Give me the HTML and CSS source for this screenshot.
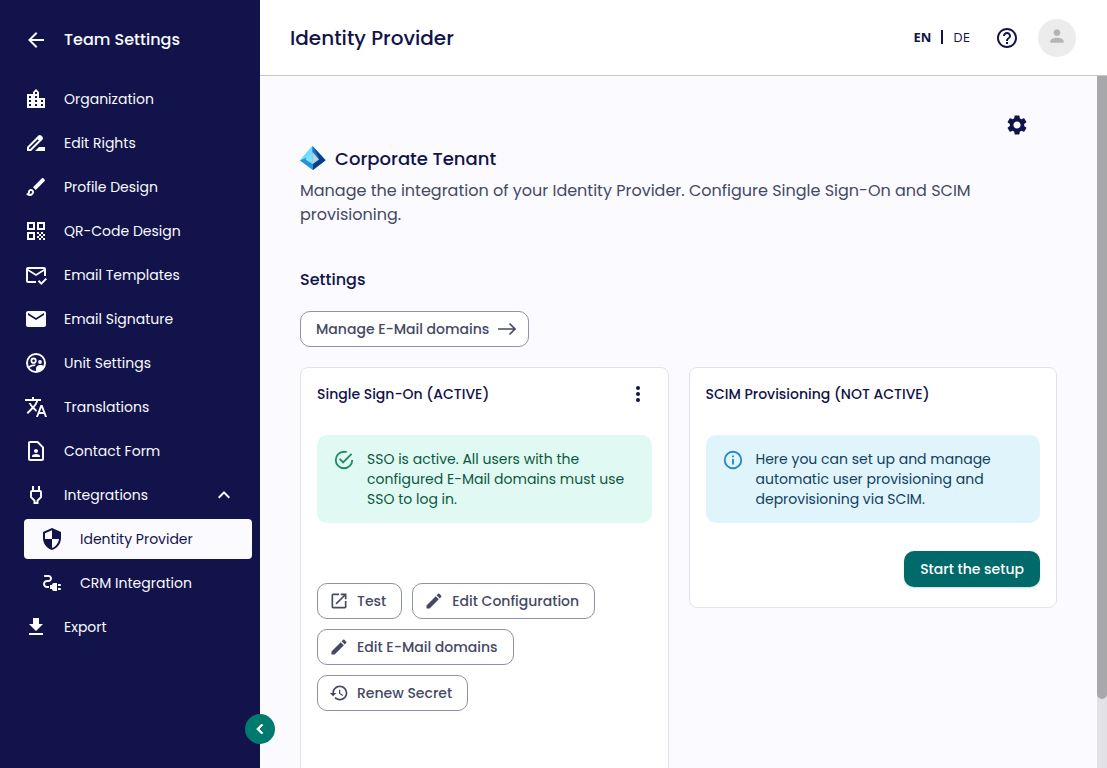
FILE: index.html
```
<!DOCTYPE html>
<html lang="en">
<head>
<meta charset="utf-8">
<title>Identity Provider</title>
<link rel="stylesheet" href="styles.css">
</head>
<body>
<div class="app">
  <aside class="sidebar">
    <a class="nav-head" href="#"><svg class="icon" viewBox="0 0 24 24"><path d="M20 11H7.830l5.590-5.590L12 4l-8 8 8 8 1.410-1.410L7.830 13H20z"/></svg>Team Settings</a>
    <nav class="nav">
      <a class="nav-item" href="#"><svg class="icon" viewBox="0 0 24 24"><path d="M15 11V5l-3-3-3 3v2H3v14h18V11h-6zm-8 8H5v-2h2v2zm0-4H5v-2h2v2zm0-4H5V9h2v2zm6 8h-2v-2h2v2zm0-4h-2v-2h2v2zm0-4h-2V9h2v2zm0-4h-2V5h2v2zm6 12h-2v-2h2v2zm0-4h-2v-2h2v2z"/></svg>Organization</a>
      <a class="nav-item" href="#"><svg class="icon" viewBox="0 0 24 24"><path d="M18.410 5.800 17.200 4.590c-.78-.78-2.050-.78-2.830 0l-2.680 2.680L3 15.960V20h4.040l8.740-8.740 2.630-2.630c.79-.78.79-2.050 0-2.830zM6.210 18H5v-1.210l8.660-8.660 1.210 1.210L6.210 18zM11 20l4-4h6v4H11z"/></svg>Edit Rights</a>
      <a class="nav-item" href="#"><svg class="icon" viewBox="0 0 24 24"><path d="M7 16c.55 0 1 .45 1 1 0 1.100-.9 2-2 2-.17 0-.33-.02-.5-.05.31-.55.5-1.210.5-1.950 0-.55.45-1 1-1M18.670 3c-.26 0-.51.1-.71.29L9 12.250 11.750 15l8.960-8.960c.39-.39.39-1.020 0-1.410l-1.340-1.340c-.2-.2-.45-.29-.7-.29zM7 14c-1.660 0-3 1.340-3 3 0 1.310-1.160 2-2 2 .92 1.220 2.490 2 4 2 2.210 0 4-1.790 4-4 0-1.660-1.340-3-3-3z" fill-rule="evenodd"/></svg>Profile Design</a>
      <a class="nav-item" href="#"><svg class="icon" viewBox="0 0 24 24"><path d="M3 11h8V3H3v8zm2-6h4v4H5V5zM3 21h8v-8H3v8zm2-6h4v4H5v-4zM13 3v8h8V3h-8zm6 6h-4V5h4v4zM19 19h2v2h-2zM13 13h2v2h-2zM15 15h2v2h-2zM13 17h2v2h-2zM15 19h2v2h-2zM17 17h2v2h-2zM17 13h2v2h-2zM19 15h2v2h-2z"/></svg>QR-Code Design</a>
      <a class="nav-item" href="#"><svg class="icon" viewBox="0 0 24 24"><path d="M22 6c0-1.100-.9-2-2-2H4c-1.100 0-2 .9-2 2v12c0 1.100.9 2 2 2h8v-2H4V8l8 5 8-5v5h2V6zm-10 5L4 6h16l-8 5zM17.340 22l-3.540-3.540 1.410-1.410 2.120 2.120 4.240-4.240L23 16.340 17.340 22z"/></svg>Email Templates</a>
      <a class="nav-item" href="#"><svg class="icon" viewBox="0 0 24 24"><path d="M20 4H4c-1.100 0-2 .9-2 2v12c0 1.100.9 2 2 2h16c1.100 0 2-.9 2-2V6c0-1.100-.9-2-2-2zm0 4-8 5-8-5V6l8 5 8-5v2z"/></svg>Email Signature</a>
      <a class="nav-item" href="#"><svg class="icon" viewBox="0 0 24 24"><circle cx="12" cy="12" r="9" fill="none" stroke="currentColor" stroke-width="2"/><circle cx="9.600" cy="9.700" r="2.200" fill="none" stroke="currentColor" stroke-width="1.800"/><circle cx="16" cy="11" r="1.900"/><path d="M4.500 15.500c1.300-1.300 3.300-2 5.100-2 .8 0 1.600.1 2.300.3l-1.700 1.500c-1.800-.1-3.400.5-4.600 1.800zM12 21v-3.700c0-2.300 2.300-3.400 4.200-3.400 1.500 0 3 .5 4 1.400C18.900 18.900 15.800 21 12 21z"/></svg>Unit Settings</a>
      <a class="nav-item" href="#"><svg class="icon" viewBox="0 0 24 24"><path d="M12.870 15.070l-2.540-2.510.03-.03c1.740-1.940 2.980-4.170 3.710-6.530H17V4h-7V2H8v2H1v1.990h11.170C11.500 7.920 10.440 9.750 9 11.350 8.070 10.320 7.300 9.190 6.690 8h-2c.73 1.630 1.730 3.170 2.980 4.560l-5.090 5.020L4 19l5-5 3.110 3.110.76-2.040zM18.500 10h-2L12 22h2l1.120-3h4.750L21 22h2l-4.500-12zm-2.620 7l1.620-4.330L19.120 17h-3.240z"/></svg>Translations</a>
      <a class="nav-item" href="#"><svg class="icon" viewBox="0 0 24 24"><path fill-rule="evenodd" d="M13.170 4L18 8.830V20H6V4h7.170M14 2H6c-1.100 0-2 .9-2 2v16c0 1.100.9 2 2 2h12c1.100 0 2-.9 2-2V8l-6-6zM12 14c1.100 0 2-.9 2-2s-.9-2-2-2-2 .9-2 2 .9 2 2 2zM16 17.430c0-.81-.48-1.530-1.220-1.850-.85-.37-1.790-.58-2.780-.58s-1.930.21-2.780.58C8.480 15.900 8 16.620 8 17.430V18h8v-.57z"/></svg>Contact Form</a>
      <a class="nav-item" href="#" aria-expanded="true"><svg class="icon" viewBox="0 0 24 24"><path fill-rule="evenodd" d="M16 9v4.660l-3.500 3.510V19h-1v-1.830L8 13.650V9h8m0-6h-2v4h-4V3H8v4c-1.100 0-2 .9-2 2v5.500L9.500 18v3h5v-3l3.500-3.510V9c0-1.100-.9-2-2-2V3z"/></svg>Integrations<svg class="icon chevron" viewBox="0 0 24 24"><path d="M7.410 15.410 12 10.830l4.590 4.580L18 14l-6-6-6 6z"/></svg></a>
      <a class="nav-item nav-sub nav-active" href="#" aria-current="page"><svg class="icon" viewBox="0 0 24 24"><path d="M12 1 3 5v6c0 5.550 3.840 10.740 9 12 5.160-1.260 9-6.450 9-12V5l-9-4zm0 10.990h7c-.53 4.120-3.280 7.790-7 8.940V12H5V6.300l7-3.110v8.800z"/></svg>Identity Provider</a>
      <a class="nav-item nav-sub" href="#"><svg class="icon" viewBox="0 0 24 24"><path d="M21 14c0-.55-.45-1-1-1h-2v2h2c.55 0 1-.45 1-1zM20 17h-2v2h2c.55 0 1-.45 1-1s-.45-1-1-1zM12 14h-2v4h2c0 1.100.9 2 2 2h3v-8h-3c-1.100 0-2 .9-2 2zM5 13c0-1.100.9-2 2-2h1.500c1.930 0 3.500-1.570 3.500-3.500S10.430 4 8.500 4H5c-.55 0-1 .45-1 1s.45 1 1 1h3.500c.83 0 1.500.67 1.500 1.500S9.330 9 8.500 9H7c-2.210 0-4 1.790-4 4s1.790 4 4 4h2v-2H7c-1.100 0-2-.9-2-2z"/></svg>CRM Integration</a>
      <a class="nav-item" href="#"><svg class="icon" viewBox="0 0 24 24"><path d="M19 9h-4V3H9v6H5l7 7 7-7zM5 18v2h14v-2H5z"/></svg>Export</a>
    </nav>
    <button class="collapse" type="button" aria-label="Collapse sidebar"><svg class="icon-m" viewBox="0 0 24 24"><path d="M15.410 7.410 14 6l-6 6 6 6 1.410-1.410L10.830 12z" stroke="currentColor"/></svg></button>
  </aside>
  <div class="page">
    <header class="topbar">
      <h1 class="page-title">Identity Provider</h1>
      <div class="lang"><a class="lang-link lang-current" href="#">EN</a><span class="lang-rule"></span><a class="lang-link" href="#">DE</a></div>
      <button class="icon-button" type="button" aria-label="Help"><svg class="icon" viewBox="0 0 24 24"><path d="M11 18h2v-2h-2v2zm1-16C6.480 2 2 6.480 2 12s4.480 10 10 10 10-4.480 10-10S17.520 2 12 2zm0 18c-4.410 0-8-3.590-8-8s3.590-8 8-8 8 3.590 8 8-3.590 8-8 8zm0-14c-2.210 0-4 1.790-4 4h2c0-1.100.9-2 2-2s2 .9 2 2c0 2-3 1.750-3 5h2c0-2.250 3-2.500 3-5 0-2.210-1.790-4-4-4z"/></svg></button>
      <button class="avatar" type="button" aria-label="Account"><svg class="icon-m" viewBox="0 0 24 24"><path d="M12 12c2.210 0 4-1.790 4-4s-1.790-4-4-4-4 1.790-4 4 1.790 4 4 4zm0 2c-2.670 0-8 1.340-8 4v2h16v-2c0-2.660-5.330-4-8-4z"/></svg></button>
    </header>
    <div class="scroller">
    <main class="content">
      <div class="tools"><button class="icon-button" type="button" aria-label="Settings"><svg class="icon" viewBox="0 0 24 24"><path d="M19.140 12.940c.04-.3.06-.61.06-.94 0-.32-.02-.64-.07-.94l2.030-1.580c.18-.14.23-.41.12-.61l-1.920-3.320c-.12-.22-.37-.29-.59-.22l-2.390.96c-.5-.38-1.030-.7-1.620-.94l-.36-2.540c-.04-.24-.24-.41-.48-.41h-3.840c-.24 0-.43.17-.47.41l-.36 2.540c-.59.24-1.130.57-1.620.94l-2.390-.96c-.22-.08-.47 0-.59.22L2.740 8.870c-.12.21-.08.47.12.61l2.030 1.580c-.05.3-.09.63-.09.94s.02.64.07.94l-2.030 1.580c-.18.14-.23.41-.12.61l1.920 3.320c.12.22.37.29.59.22l2.390-.96c.5.38 1.030.7 1.620.94l.36 2.540c.05.24.24.41.48.41h3.840c.24 0 .44-.17.47-.41l.36-2.540c.59-.24 1.130-.56 1.620-.94l2.390.96c.22.08.47 0 .59-.22l1.920-3.320c.12-.22.07-.47-.12-.61l-2.010-1.580zM12 15.600c-1.980 0-3.600-1.620-3.600-3.600s1.620-3.600 3.600-3.600 3.600 1.620 3.600 3.600-1.620 3.600-3.600 3.600z"/></svg></button></div>
      <div class="tenant">
        <svg class="tenant-logo" viewBox="0 0 26 24"><path fill="#2bb4ee" d="M12.500 0 25.500 14 13 24 0 14.500z"/><path fill="#6fdcfb" d="M12.500 0 0 14.500 5 17 12.500 6z"/><path fill="#1e6fbe" d="M12.500 0 25.500 14 20 16.500 12.500 7z"/><path fill="#0b3f86" d="M15 3 25.500 14.500 13 24v-6l6-5z"/><path fill="#2a93d8" d="M0 14.500 5.500 12 13 18v6z"/><path fill="#7fe0fa" d="M12.500 6 5.500 13.500 12.500 18z"/><path fill="#b4d7dc" d="M12.500 6 19 13.500 12.500 18z"/></svg>
        <h2 class="tenant-name">Corporate Tenant</h2>
      </div>
      <p class="lead">Manage the integration of your Identity Provider. Configure Single Sign-On and SCIM provisioning.</p>
      <h3 class="section-title">Settings</h3>
      <button class="btn btn-end" type="button">Manage E-Mail domains<svg class="icon-m" viewBox="0 0 20 20"><path d="M1 10h17M12.500 4.500 18 10l-5.500 5.500" fill="none" stroke="currentColor" stroke-width="1.700"/></svg></button>
      <div class="cards">
        <section class="card card-sso">
          <div class="card-head"><h4 class="card-title">Single Sign-On (ACTIVE)</h4><button class="icon-button more" type="button" aria-label="More options"><svg class="icon" viewBox="0 0 24 24"><circle cx="12" cy="6" r="2"/><circle cx="12" cy="12" r="2"/><circle cx="12" cy="18" r="2"/></svg></button></div>
          <div class="alert alert-success"><svg class="icon-a" viewBox="0 0 24 24"><path d="M20 12A8 8 0 0 1 12 20A8 8 0 0 1 4 12A8 8 0 0 1 12 4C12.760 4 13.500 4.110 14.200 4.310L15.770 2.740C14.610 2.260 13.340 2 12 2A10 10 0 0 0 2 12A10 10 0 0 0 12 22A10 10 0 0 0 22 12M7.910 10.080L6.500 11.500L11 16L21 6L19.590 4.580L11 13.170z"/></svg><p class="alert-text">SSO is active. All users with the configured E-Mail domains must use SSO to log in.</p></div>
          <div class="actions">
            <button class="btn" type="button"><svg class="icon-m" viewBox="0 0 24 24"><path d="M19 19H5V5h7V3H5c-1.110 0-2 .9-2 2v14c0 1.100.89 2 2 2h14c1.100 0 2-.9 2-2v-7h-2v7zM14 3v2h3.590l-9.830 9.830 1.410 1.410L19 6.410V10h2V3h-7z"/></svg>Test</button>
            <button class="btn" type="button"><svg class="icon-m" viewBox="0 0 24 24"><path d="M3 17.250V21h3.750L17.810 9.940l-3.750-3.750L3 17.250zM20.710 7.040c.39-.39.39-1.020 0-1.410l-2.340-2.340c-.39-.39-1.020-.39-1.410 0l-1.830 1.830 3.750 3.750 1.830-1.830z"/></svg>Edit Configuration</button>
            <button class="btn" type="button"><svg class="icon-m" viewBox="0 0 24 24"><path d="M3 17.250V21h3.750L17.810 9.940l-3.750-3.750L3 17.250zM20.710 7.040c.39-.39.39-1.020 0-1.410l-2.340-2.340c-.39-.39-1.020-.39-1.410 0l-1.830 1.830 3.750 3.750 1.830-1.830z"/></svg>Edit E-Mail domains</button>
            <button class="btn" type="button"><svg class="icon-m" viewBox="0 0 24 24"><path d="M13 3c-4.970 0-9 4.030-9 9H1l3.890 3.890.07.14L9 12H6c0-3.870 3.130-7 7-7s7 3.130 7 7-3.130 7-7 7c-1.930 0-3.680-.79-4.940-2.060l-1.420 1.420C8.270 19.990 10.510 21 13 21c4.970 0 9-4.030 9-9s-4.030-9-9-9zm-1 5v5l4.280 2.540.72-1.210-3.500-2.080V8H12z"/></svg>Renew Secret</button>
          </div>
        </section>
        <section class="card">
          <div class="card-head"><h4 class="card-title">SCIM Provisioning (NOT ACTIVE)</h4></div>
          <div class="alert alert-info"><svg class="icon-a" viewBox="0 0 24 24"><path d="M11 9H13V7H11M12 20C7.590 20 4 16.410 4 12C4 7.590 7.590 4 12 4C16.410 4 20 7.590 20 12C20 16.410 16.410 20 12 20M12 2A10 10 0 0 0 2 12A10 10 0 0 0 12 22A10 10 0 0 0 22 12A10 10 0 0 0 12 2M11 17H13V11H11V17Z"/></svg><p class="alert-text">Here you can set up and manage automatic user provisioning and deprovisioning via SCIM.</p></div>
          <div class="setup"><button class="btn btn-primary" type="button">Start the setup</button></div>
        </section>
      </div>
    </main>
    <div class="rail" aria-hidden="true"><div class="thumb"></div></div>
    </div>
  </div>
</div>
</body>
</html>
```
FILE: styles.css
```
* { box-sizing: border-box; }
body, h1, h2, h3, h4, p { margin: 0; }
body { font-family: Poppins, Inter, "Open Sans", sans-serif; font-size: 14px; color: #11134a; }
button { font: inherit; color: inherit; cursor: pointer; }
a { color: inherit; text-decoration: none; }
svg { display: block; flex: none; fill: currentColor; }
.icon { width: 24px; height: 24px; }
.icon-a { width: 22px; height: 22px; }
.icon-m { width: 20px; height: 20px; }

.app { display: flex; height: 100vh; background: #fafaff; }
.sidebar { position: relative; flex: none; width: 260px; padding: 20px 8px 0 24px; background: #11134a; color: #fafaff; }
.nav-head { display: flex; align-items: center; gap: 16px; height: 39px; font-size: 16px; font-weight: 500; }
.nav { display: grid; gap: 4px; padding-top: 20px; }
.nav-item { display: flex; align-items: center; gap: 16px; height: 40px; border-radius: 4px; }
.nav-sub { padding-left: 16px; }
.nav-active { background: #fafaff; color: #11134a; }
.chevron { margin-left: auto; margin-right: 16px; }
.collapse { position: absolute; right: -15px; bottom: 24px; display: grid; place-items: center; width: 30px; height: 30px; padding: 0; border: 0; border-radius: 50%; background: #00796f; color: #fff; }

.page { flex: 1; min-width: 0; display: flex; flex-direction: column; }
.topbar { flex: none; display: flex; align-items: center; height: 76px; padding: 0 31px 0 30px; border-bottom: 1px solid #c5c5cc; background: #fff; }
.page-title { margin-right: auto; font-size: 20px; font-weight: 500; }
.lang { display: flex; align-items: center; gap: 10px; margin-right: 25px; padding-bottom: 2px; font-family: "Open Sans", sans-serif; font-size: 13px; }
.lang-current { font-weight: 700; }
.lang-rule { width: 2px; height: 14px; background: #11134a; }
.icon-button { padding: 0; border: 0; background: none; }
.avatar { display: grid; place-items: center; width: 38px; height: 38px; margin-left: 19px; padding: 0 0 3px; border: 0; border-radius: 50%; background: #ececec; color: #b5b5b8; }

.scroller { flex: 1; min-height: 0; display: flex; }
.content { flex: 1; min-width: 0; overflow-y: auto; scrollbar-width: none; padding: 37px 40px 36px; }
.rail { flex: none; width: 10px; background: #e1e1e6; }
.thumb { height: 90%; border-radius: 0 0 5px 5px; background: #a8a8aa; }
.tools { display: flex; justify-content: flex-end; padding-right: 28px; }
.tenant { display: flex; align-items: center; gap: 9px; height: 42px; }
.tenant-logo { width: 26px; height: 24px; }
.tenant-name { font-size: 18px; font-weight: 500; }
.lead { font-size: 16px; line-height: 24px; color: #454964; }
.section-title { padding: 40px 0 18px; font-size: 16px; line-height: 26px; font-weight: 500; }
.btn { display: inline-flex; align-items: center; gap: 8px; height: 36px; padding: 0 15px 0 11px; border: 1px solid #8f93a3; border-radius: 10px; background: #fff; color: #454964; font-weight: 500; }
.btn-end { padding: 0 11px 0 15px; }
.btn-primary { padding: 0 16px; border: 0; background: #006a6a; color: #fff; box-shadow: 0 1px 2px #00303033; }
.cards { display: grid; grid-template-columns: 1fr 1fr; align-items: start; gap: 20px; padding-top: 20px; }
.card { padding: 10px 16px 20px; border: 1px solid #e2e2ea; border-radius: 8px; background: #fff; }
.card-sso { min-height: 444px; }
.card-head { display: flex; align-items: center; justify-content: space-between; height: 32px; }
.card-title { font-size: 14px; font-weight: 500; }
.more { margin-right: 2px; }
.alert { display: flex; gap: 12px; margin-top: 25px; padding: 14px 16px; border-radius: 10px; }
.alert-text { line-height: 20px; }
.alert-success { background: #e0faf3; color: #0d573f; }
.alert-success .icon-a { color: #1f8a63; }
.alert-info { background: #e0f4fc; color: #123f5c; }
.alert-info .icon-a { color: #2386c8; }
.actions { display: flex; flex-wrap: wrap; gap: 10px; padding-top: 60px; }
.setup { display: flex; justify-content: flex-end; padding-top: 28px; }
```
